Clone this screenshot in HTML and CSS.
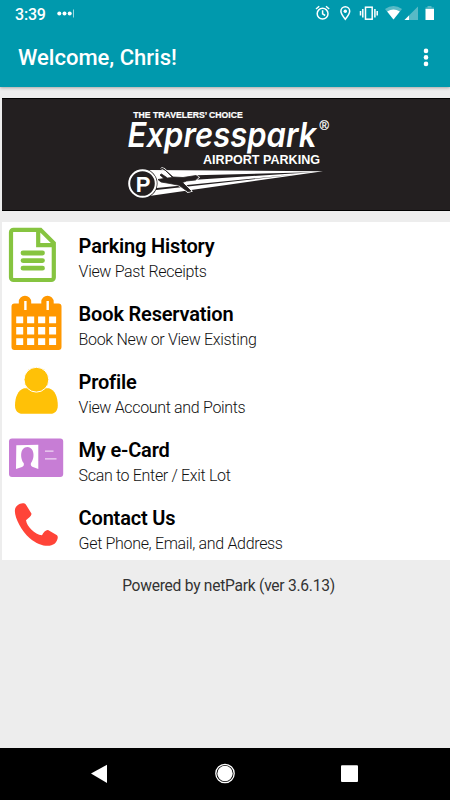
FILE: index.html
```html
<!DOCTYPE html>
<html lang="en">
<head>
<meta charset="utf-8">
<title>Expresspark</title>
<link rel="stylesheet" href="styles.css">
</head>
<body>
<header class="top">
  <div class="status">
    <span class="time">3:39</span>
    <svg class="dots" viewBox="56 0 20 28"><g fill="#fff"><circle cx="59.3" cy="13.5" r="2"/><circle cx="64.5" cy="13.5" r="2"/><circle cx="69.7" cy="13.5" r="2"/><path d="M73 9.5h1v8h-1z" opacity=".6"/></g></svg>
    <svg class="indicators" viewBox="310 0 130 28">
      <g fill="none" stroke="#fff" stroke-width="1.5">
        <circle cx="322.6" cy="13.7" r="5.4"/><path d="M322.6 10.3v3.6l2.6 1.6M316 9l3.2-2.7M329.2 9L326 6.300"/>
        <path d="M345.300 19.300C342.500 15.700 340.900 13.300 340.900 11.200a4.400 4.400 0 0 1 8.800 0c0 2.100-1.600 4.500-4.400 8.100z"/>
        <rect x="365.500" y="7.200" width="6.700" height="12"/><path d="M362.800 9v8.500M374.900 9v8.500M360.500 11v4.500M377.200 11v4.500"/>
      </g>
      <circle cx="345.300" cy="11.200" r="1.700" fill="#fff"/>
      <path d="M385 9Q393.500 2.800 402 9L393.500 19.500z" fill="#58bac6"/><path d="M387.200 11.600Q393.500 7.300 399.800 11.600L393.500 19.500z" fill="#fff"/>
      <path d="M418 6.500V20h-13.500z" fill="#58bac6"/><path d="M409 15.500V20h-4.500z" fill="#fff"/>
      <path d="M427.500 6h4v1.500h2.500v2h-8.500v-2h2z" fill="#58bac6"/><path d="M425.500 9h8.500v11h-8.500z" fill="#fff"/>
    </svg>
  </div>
  <div class="bar">
    <h1>Welcome, Chris!</h1>
    <svg class="more" viewBox="0 0 6 20"><g fill="#fff"><circle cx="3" cy="2.900" r="2.300"/><circle cx="3" cy="9.400" r="2.300"/><circle cx="3" cy="15.900" r="2.300"/></g></svg>
  </div>
</header>
<main>
  <section class="banner">
    <svg viewBox="2 98 448 113">
      <g fill="#fff" class="logo">
        <text x="133.300" y="118" font-size="8.500" font-weight="700" textLength="109.500" lengthAdjust="spacingAndGlyphs" stroke="#fff" stroke-width=".2">THE TRAVELERS’ CHOICE</text>
        <text class="wordmark" x="127.500" y="146.800" font-size="34" textLength="189" lengthAdjust="spacingAndGlyphs">Expresspark</text>
        <text x="319.500" y="129.500" font-size="12" textLength="9.500" lengthAdjust="spacingAndGlyphs" stroke="#fff" stroke-width=".2">®</text>
        <text x="203" y="164" font-size="13" font-weight="700" textLength="117" lengthAdjust="spacingAndGlyphs">AIRPORT PARKING</text>
      </g>
      <path d="M149 170L323 171.300L151 195.700z" fill="#fff"/>
      <path d="M196 175.300L312 172.200L192 180zM154 190.300L296 174.400L154 188.300z" fill="#231f20"/>
      <path d="M161 168l3 1 9 8 10 .5 13-2 2.500 1.800-3 2.700-9 1-4 1.500 8.500 8.500-3 .8-9-6.500-9-1.800-9-1.500-3-2.500 6-1-4-3.500 1.500-1 6 4 5-.5-7-7z" fill="#231f20" stroke="#fff" stroke-width="2"/>
      <path d="M161 168l3 1 9 8 10 .5 13-2 2.500 1.800-3 2.700-9 1-4 1.500 8.500 8.500-3 .8-9-6.500-9-1.800-9-1.500-3-2.500 6-1-4-3.500 1.500-1 6 4 5-.5-7-7z" fill="#231f20" stroke="#231f20" stroke-width=".8"/>
      <circle cx="142.500" cy="183.500" r="15" fill="#231f20"/><circle cx="142.500" cy="183.500" r="13.300" fill="#231f20" stroke="#fff" stroke-width="2"/>
      <text class="logo" x="135.700" y="191.500" font-size="22" font-weight="700" fill="#fff">P</text>
    </svg>
  </section>
  <nav class="menu">
    <a class="row">
      <svg viewBox="2 222 76 68"><path d="M14 229.800H40.500L53.800 243V277.500a2.500 2.500 0 0 1-2.500 2.500H13.500a2.500 2.500 0 0 1-2.500-2.500V232.300a2.500 2.500 0 0 1 2.500-2.500zM38.200 231V245.200H54" fill="none" stroke="#86c440" stroke-width="4.200"/><path d="M23 253H42.500M23 260.600H42.500M23 268.200H42.500" stroke="#86c440" stroke-width="4.800" stroke-linecap="round"/></svg>
      <span class="label"><b>Parking History</b><span>View Past Receipts</span></span>
    </a>
    <a class="row">
      <svg viewBox="2 290 76 68"><path fill="#ff9800" d="M14.500 303.500H18.800V302a6.200 6.200 0 0 1 12.400 0V303.500H41.300V302a6.200 6.200 0 0 1 12.400 0V303.500H58.500a3 3 0 0 1 3 3V347a3 3 0 0 1-3 3H14.500a3 3 0 0 1-3-3V306.500a3 3 0 0 1 3-3z"/><path fill="#fff" d="M24.200 301h2.400v9h-2.400zM46.500 301h2.400v9h-2.400zM16.200 316.500h7v6.700h-7zm10.900 0h7.100v6.700h-7.100zm11 0h7.100v6.700h-7.100zm11 0h7v6.700h-7zM16.200 327h7v7.500h-7zm10.900 0h7.100v7.500h-7.100zm11 0h7.100v7.500h-7.100zm11 0h7v7.500h-7zM16.200 338.300h7v6.700h-7zm10.900 0h7.100v6.700h-7.100zm11 0h7.100v6.700h-7.100zm11 0h7v6.700h-7z"/></svg>
      <span class="label"><b>Book Reservation</b><span>Book New or View Existing</span></span>
    </a>
    <a class="row">
      <svg viewBox="2 358 76 68"><path fill="#ffc107" d="M24 388.300h25c6 1.700 8.800 9 8.800 17.200 0 5.500-3 8.300-7.300 8.300H22.500c-4.500 0-7.500-2.800-7.500-8.300 0-8.200 3-15.500 9-17.200z"/><circle cx="36.400" cy="379.700" r="12.400" fill="#ffc107" stroke="#fff"/></svg>
      <span class="label"><b>Profile</b><span>View Account and Points</span></span>
    </a>
    <a class="row">
      <svg viewBox="2 426 76 68"><rect x="9" y="438.600" width="54.200" height="38.400" rx="3" fill="#c77dd5"/><path fill="#fff" d="M16.300 445.300L38.300 444.700V469L32.300 466.700C30.700 466.100 30.500 464.300 31 463C34.500 459 35.300 448 27.500 447C19.500 447 20.200 459 23.700 463C24.200 465 23.800 466.300 22 467L16 469z"/><path d="M45 451.200h8.500M45 458.900h11.500" stroke="#f0d9f4" stroke-width="1.300"/></svg>
      <span class="label"><b>My e-Card</b><span>Scan to Enter / Exit Lot</span></span>
    </a>
    <a class="row last">
      <svg viewBox="2 494 76 66"><path fill="#ff4438" d="M17.300 505.500C20.500 502.700 24.500 502.600 26 504.700L31.400 513.500C32 515.500 29 518 26 520.200C27 526.500 34.500 534.500 42 535.200C43.500 532 46.500 529.300 48.500 530.200L57 535.200C58.700 536.700 57.500 541 54.600 543.800C49.500 547.500 39.500 546.500 29.500 538C20.500 530.200 12.500 514 15.500 507.700Q16.200 506.500 17.300 505.500z"/></svg>
      <span class="label"><b>Contact Us</b><span>Get Phone, Email, and Address</span></span>
    </a>
  </nav>
  <p class="powered">Powered by netPark (ver 3.6.13)</p>
</main>
<footer class="navbar">
  <svg viewBox="0 748 450 52"><path d="M91 773.500L107 764.700V783z" fill="#fff"/><circle cx="225" cy="773.500" r="9.200" fill="none" stroke="#fff" stroke-width="1.300"/><circle cx="225" cy="773.500" r="7.700" fill="#fff"/><rect x="341" y="765.300" width="17" height="16.700" rx="1" fill="#fff"/></svg>
</footer>
</body>
</html>
```
FILE: styles.css
```css
* { box-sizing: border-box; }
body {
  margin: 0;
  height: 800px;
  display: flex;
  flex-direction: column;
  background: #ededed;
  font-family: Roboto, "Liberation Sans", sans-serif;
  overflow: hidden;
}
svg { display: block; flex: none; }
.top {
  height: 87px;
  flex: none;
  background: #0099ad;
  color: #fff;
  box-shadow: 0 1px 3px rgba(0, 0, 0, .3);
}
.status { height: 28px; display: flex; padding: 0 10px 0 15px; }
.time { width: 41px; font-size: 16px; font-weight: 500; line-height: 29px; letter-spacing: -.2px; }
.dots { width: 20px; height: 28px; }
.indicators { width: 130px; height: 28px; margin-left: auto; }
.bar {
  height: 59px;
  display: flex;
  align-items: center;
  justify-content: space-between;
  padding: 0 21px 0 18px;
}
h1 { margin: 0; font-size: 22px; font-weight: 500; line-height: 59px; }
.more { width: 6px; height: 20px; }
main { flex: 1; padding: 11px 0 0 2px; }
.banner {
  height: 113px;
  background: #231f20;
  border-top: 1px solid #000;
  border-bottom: 1px solid #000;
}
.banner svg { width: 448px; height: 113px; margin-top: -1px; }
.logo { font-family: "Liberation Sans", sans-serif; }
.wordmark {
  font-family: Inter, "Liberation Sans", sans-serif;
  font-weight: 600;
  font-style: italic;
  font-feature-settings: "cv11";
}
.menu { margin-top: 11px; background: #fff; }
.row { display: flex; height: 68px; }
.row svg { width: 76px; height: 68px; }
.row.last, .row.last svg { height: 66px; }
.label { display: flex; flex-direction: column; padding: 11px 0 0 .6px; }
.label b { font-size: 20px; font-weight: 600; line-height: 26px; letter-spacing: -.18px; color: #000; }
.label span { font-size: 16px; font-weight: 300; line-height: 22px; letter-spacing: -.33px; color: #111; margin-top: 2px; }
.powered {
  margin: 15px 0 0;
  padding-left: 5px;
  text-align: center;
  font-size: 15.6px;
  font-weight: 400;
  line-height: 22px;
  letter-spacing: -.26px;
  color: #333;
}
.navbar { height: 52px; flex: none; background: #000; }
.navbar svg { width: 450px; height: 52px; }
```
